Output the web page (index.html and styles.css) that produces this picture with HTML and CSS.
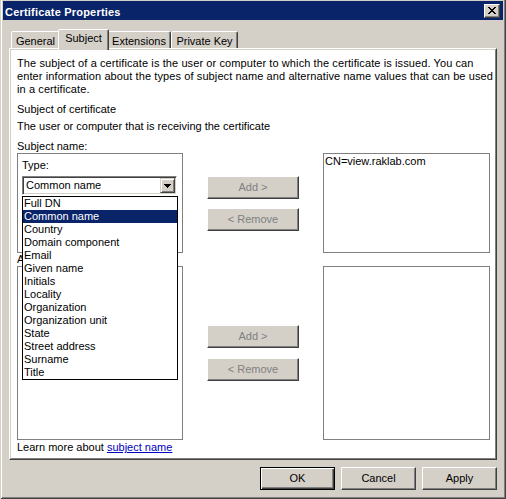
FILE: index.html
```html
<!DOCTYPE html>
<html>
<head>
<meta charset="utf-8">
<title>Certificate Properties</title>
<link rel="stylesheet" href="styles.css">
</head>
<body>
<div class="window">
  <div class="titlebar">
    <span class="title">Certificate Properties</span>
    <span class="close">
      <svg width="8" height="7" viewBox="0 0 8 7" shape-rendering="crispEdges"><path d="M0 0h2v1H0zM6 0h2v1H6zM1 1h2v1H1zM5 1h2v1H5zM2 2h4v1H2zM3 3h2v1H3zM2 4h4v1H2zM1 5h2v1H1zM5 5h2v1H5zM0 6h2v1H0zM6 6h2v1H6z" fill="#000"/></svg>
    </span>
  </div>
  <div class="tabs">
    <div class="tab t-general">General</div>
    <div class="tab t-subject active">Subject</div>
    <div class="tab t-ext">Extensions</div>
    <div class="tab t-key">Private Key</div>
  </div>
  <div class="panel">
    <div class="page">
      <p class="intro">The subject of a certificate is the user or computer to which the certificate is issued. You can<br>enter information about the types of subject name and alternative name values that can be used<br>in a certificate.</p>
      <p class="heading">Subject of certificate</p>
      <p class="sub">The user or computer that is receiving the certificate</p>
      <div class="label">Subject name:</div>
      <div class="row row-subject">
        <div class="group">
          <div class="type-label">Type:</div>
          <div class="combo">
            <span class="combo-text">Common name</span>
            <span class="combo-btn"><svg width="7" height="4" viewBox="0 0 7 4" shape-rendering="crispEdges"><path d="M0 0h7v1H0zM1 1h5v1H1zM2 2h3v1H2zM3 3h1v1H3z" fill="#000"/></svg></span>
          </div>
          <ul class="dropdown">
            <li>Full DN</li>
            <li class="selected">Common name</li>
            <li>Country</li>
            <li>Domain component</li>
            <li>Email</li>
            <li>Given name</li>
            <li>Initials</li>
            <li>Locality</li>
            <li>Organization</li>
            <li>Organization unit</li>
            <li>State</li>
            <li>Street address</li>
            <li>Surname</li>
            <li>Title</li>
          </ul>
        </div>
        <div class="mid">
          <div class="btn disabled">Add &gt;</div>
          <div class="btn disabled">&lt; Remove</div>
        </div>
        <div class="listbox">CN=view.raklab.com</div>
      </div>
      <div class="label label-alt">Alternative name:</div>
      <div class="row row-alt">
        <div class="group"></div>
        <div class="mid">
          <div class="btn disabled">Add &gt;</div>
          <div class="btn disabled">&lt; Remove</div>
        </div>
        <div class="listbox"></div>
      </div>
      <div class="learn">Learn more about <a href="#">subject name</a></div>
    </div>
  </div>
  <div class="footer">
    <div class="btn fbtn default">OK</div>
    <div class="btn fbtn">Cancel</div>
    <div class="btn fbtn">Apply</div>
  </div>
</div>
</body>
</html>
```

FILE: styles.css
```css
html, body {
  margin: 0;
  padding: 0;
  background: #d4d0c8;
}

body {
  font-family: "Liberation Sans", Arial, sans-serif;
  font-size: 11px;
  line-height: 13px;
  color: #000;
}

.window {
  width: 506px;
  height: 499px;
  box-sizing: border-box;
  padding: 1px 3px 3px;
  background: #d4d0c8;
  box-shadow: inset 1px 0 #d4d0c8, inset -1px -1px #404040, inset 2px 0 #fff, inset -2px -2px #808080;
  display: flex;
  flex-direction: column;
}

/* title bar */
.titlebar {
  height: 19px;
  background: #0a246a;
  color: #fff;
  display: flex;
  justify-content: space-between;
  align-items: flex-start;
  padding: 0 3px 0 2px;
  flex: none;
}

.title {
  font-weight: bold;
  padding-top: 5px;
  line-height: 13px;
  letter-spacing: 0.2px;
}

.close {
  margin-top: 3px;
  width: 16px;
  height: 14px;
  box-sizing: border-box;
  background: #d4d0c8;
  border: 1px solid;
  border-color: #fff #404040 #404040 #fff;
  box-shadow: inset -1px -1px #808080;
  display: flex;
  align-items: center;
  justify-content: center;
}

.close svg {
  display: block;
  margin-left: -1px;
  margin-top: -1px;
}

/* tabs */
.tabs {
  display: flex;
  height: 19px;
  margin-top: 9px;
  padding-left: 8px;
  flex: none;
  position: relative;
  z-index: 2;
}

.tab {
  box-sizing: border-box;
  height: 17px;
  margin-top: 2px;
  border: 1px solid;
  border-bottom: 0;
  border-color: #fff #404040 transparent #fff;
  border-radius: 2px 2px 0 0;
  box-shadow: inset -1px 0 #808080;
  background: #d4d0c8;
  text-align: center;
  padding-top: 3px;
  line-height: 13px;
}

.t-general { width: 49px; }
.t-ext { width: 64px; }
.t-key { width: 67px; }

.tab.active {
  width: 51px;
  height: 21px;
  margin: 0 -2px;
  padding-top: 2px;
  position: relative;
  z-index: 3;
}

/* panel */
.panel {
  margin: 0 6px;
  height: 412px;
  box-sizing: border-box;
  border: 1px solid;
  border-color: #fff #404040 #404040 #fff;
  flex: none;
}

.page {
  height: 100%;
  box-sizing: border-box;
  border: 1px solid;
  border-color: #d4d0c8 #808080 #808080 #d4d0c8;
  background: #fff;
  padding: 7px 5px 0 6px;
}

.page p {
  margin: 0;
  white-space: nowrap;
}

.intro {
  letter-spacing: 0.1px;
}

.heading { margin-top: 7px !important; }
.sub { margin-top: 4px !important; }

.label {
  white-space: nowrap;
}

.sub + .label {
  margin-top: 7px;
}

.label-alt {
  height: 13px;
}

.row {
  display: grid;
  grid-template-columns: 166px 92px 167px;
  column-gap: 24px;
}

.row-subject { height: 100px; }
.row-alt { height: 174px; }

.group {
  border: 1px solid #808080;
  box-sizing: border-box;
  position: relative;
  padding: 5px 0 0 4px;
}

.listbox {
  border: 1px solid #808080;
  box-sizing: border-box;
  padding: 1px 1px;
  white-space: nowrap;
}

.type-label {
  height: 13px;
}

.combo {
  margin-top: 4px;
  width: 155px;
  height: 19px;
  box-sizing: border-box;
  border: 1px solid;
  border-color: #808080 #fff #fff #808080;
  box-shadow: inset 1px 1px #404040, inset -1px -1px #d4d0c8;
  display: flex;
  align-items: center;
  padding: 1px 1px 1px 3px;
}

.combo-text {
  flex: 1;
}

.combo-btn {
  width: 15px;
  height: 15px;
  box-sizing: border-box;
  background: #d4d0c8;
  border: 1px solid;
  border-color: #d4d0c8 #404040 #404040 #d4d0c8;
  box-shadow: inset 1px 1px #fff, inset -1px -1px #808080;
  display: flex;
  align-items: center;
  justify-content: center;
}

.combo-btn svg { display: block; margin-left: -1px; }

.dropdown {
  position: absolute;
  top: 42px;
  left: 4px;
  width: 154px;
  margin: 0;
  padding: 0;
  list-style: none;
  background: #fff;
  border: 1px solid #000;
  z-index: 10;
}

.dropdown li {
  height: 13px;
  padding-left: 1px;
  white-space: nowrap;
}

.dropdown li.selected {
  background: #0a246a;
  color: #fff;
}

.mid {
  display: flex;
  flex-direction: column;
}

.row-subject .mid { padding-top: 23px; gap: 9px; }
.row-alt .mid { padding-top: 59px; gap: 10px; }

.btn {
  box-sizing: border-box;
  height: 23px;
  background: #d4d0c8;
  border: 1px solid;
  border-color: #fff #404040 #404040 #fff;
  box-shadow: inset -1px -1px #808080;
  display: flex;
  align-items: center;
  justify-content: center;
  padding-bottom: 1px;
  white-space: nowrap;
}

.btn.disabled {
  color: #808080;
}

.learn {
  margin-top: 1px;
  white-space: nowrap;
}

.learn a {
  color: #0000c0;
  text-decoration: underline;
}

/* footer */
.footer {
  display: flex;
  justify-content: flex-end;
  gap: 6px;
  margin: 7px 6px 0;
}

.fbtn {
  width: 75px;
}

.btn.default {
  border-color: #000;
  box-shadow: inset 1px 1px #fff, inset -1px -1px #404040, inset -2px -2px #808080;
}
```
